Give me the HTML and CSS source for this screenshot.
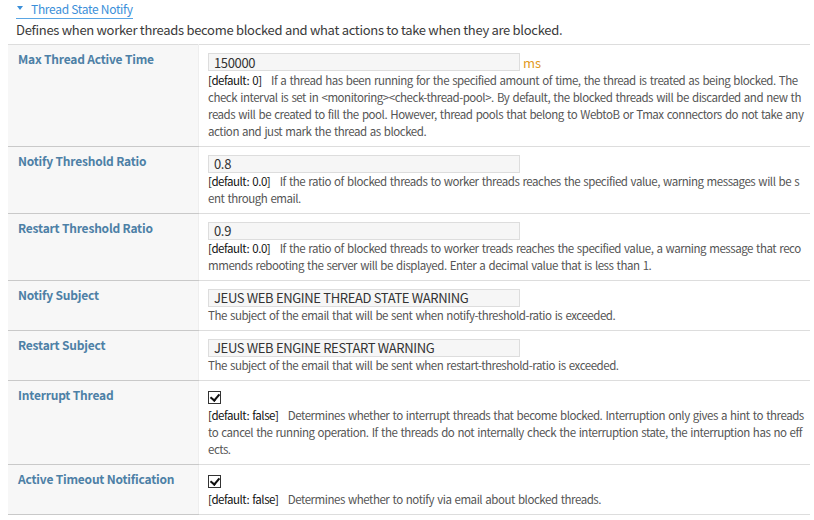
FILE: index.html
```html
<!DOCTYPE html>
<html lang="en">
<head>
  <meta charset="UTF-8">
  <title>Thread State Notify</title>
  <link rel="stylesheet" href="styles.css">
</head>
<body>
  <div class="section">
    <div class="section-head">
      <a class="toggle" href="#"><span class="arrow"></span>Thread State Notify</a>
    </div>
    <p class="section-desc">Defines when worker threads become blocked and what actions to take when they are blocked.</p>

    <table class="props">
      <tr>
        <th>Max Thread Active Time</th>
        <td>
          <div class="field unit-field"><input type="text" value="150000"><span class="unit">ms</span></div>
          <p class="help"><b>[default: 0]</b>&nbsp;&nbsp; If a thread has been running for the specified amount of time, the thread is treated as being blocked. The check interval is set in &lt;monitoring&gt;&lt;check-thread-pool&gt;. By default, the blocked threads will be discarded and new threads will be created to fill the pool. However, thread pools that belong to WebtoB or Tmax connectors do not take any action and just mark the thread as blocked.</p>
        </td>
      </tr>
      <tr>
        <th>Notify Threshold Ratio</th>
        <td>
          <div class="field"><input type="text" value="0.8"></div>
          <p class="help"><b>[default: 0.0]</b>&nbsp;&nbsp; If the ratio of blocked threads to worker threads reaches the specified value, warning messages will be sent through email.</p>
        </td>
      </tr>
      <tr>
        <th>Restart Threshold Ratio</th>
        <td>
          <div class="field"><input type="text" value="0.9"></div>
          <p class="help"><b>[default: 0.0]</b>&nbsp;&nbsp; If the ratio of blocked threads to worker treads reaches the specified value, a warning message that recommends rebooting the server will be displayed. Enter a decimal value that is less than 1.</p>
        </td>
      </tr>
      <tr>
        <th>Notify Subject</th>
        <td>
          <div class="field"><input type="text" value="JEUS WEB ENGINE THREAD STATE WARNING"></div>
          <p class="help">The subject of the email that will be sent when notify-threshold-ratio is exceeded.</p>
        </td>
      </tr>
      <tr>
        <th>Restart Subject</th>
        <td>
          <div class="field"><input type="text" value="JEUS WEB ENGINE RESTART WARNING"></div>
          <p class="help">The subject of the email that will be sent when restart-threshold-ratio is exceeded.</p>
        </td>
      </tr>
      <tr>
        <th>Interrupt Thread</th>
        <td>
          <div class="field"><span class="check"></span></div>
          <p class="help"><b>[default: false]</b>&nbsp;&nbsp; Determines whether to interrupt threads that become blocked. Interruption only gives a hint to threads to cancel the running operation. If the threads do not internally check the interruption state, the interruption has no effects.</p>
        </td>
      </tr>
      <tr>
        <th>Active Timeout Notification</th>
        <td>
          <div class="field"><span class="check"></span></div>
          <p class="help"><b>[default: false]</b>&nbsp;&nbsp; Determines whether to notify via email about blocked threads.</p>
        </td>
      </tr>
    </table>
  </div>
</body>
</html>
```

FILE: styles.css
```css
body {
  margin: 0;
  background-color: #fff;
  font-family: "Noto Sans CJK KR", "Noto Sans", sans-serif;
  color: #444;
}

.section {
  padding: 0 4px 0 8px;
}

.section-head {
  display: flex;
  align-items: flex-start;
  padding: 1px 0 0 8px;
  height: 18px;
}

.toggle {
  display: flex;
  align-items: center;
  color: #3b8fd9;
  font-size: 12px;
  line-height: 16px;
  letter-spacing: -0.3px;
  text-decoration: none;
  border-bottom: 1px solid #5aa6e4;
  padding-bottom: 1px;
}

.arrow {
  width: 0;
  height: 0;
  border-left: 3px solid transparent;
  border-right: 3px solid transparent;
  border-top: 4px solid #3b8fd9;
  margin: 0 8px 2px 1px;
}

.section-desc {
  margin: 0 0 3px 8px;
  font-size: 13px;
  line-height: 22px;
  letter-spacing: -0.3px;
  color: #3a3a3a;
}

.props {
  width: 100%;
  border-collapse: collapse;
  border-top: 1px solid #ddd;
}

.props th,
.props td {
  vertical-align: top;
  border-bottom: 1px solid #ddd;
}

.props th {
  width: 180px;
  background-color: #f7f7f7;
  border-bottom-color: #c9c9c9;
  border-right: 1px solid #eee;
  padding: 6px 0 0 10px;
  text-align: left;
  font-size: 12px;
  line-height: 16px;
  letter-spacing: -0.2px;
  font-weight: bold;
  color: #4d80a6;
}

.props td {
  padding: 8px 6px 6px 9px;
}

.field {
  display: flex;
  align-items: center;
  height: 17px;
}

.unit-field {
  height: 18px;
  margin-bottom: 1px;
}

.field input {
  width: 312px;
  height: 18px;
  box-sizing: border-box;
  margin: 0;
  padding: 0 5px;
  border: 1px solid #ddd;
  background-color: #f6f6f6;
  font-family: inherit;
  font-size: 13px;
  letter-spacing: -0.35px;
  color: #333;
}

.unit {
  margin-left: 3px;
  color: #e29a23;
  font-size: 13px;
}

.check {
  display: inline-block;
  width: 13px;
  height: 13px;
  box-sizing: border-box;
  border: 1px solid #333;
  position: relative;
}

.check::after {
  content: "";
  position: absolute;
  left: 3px;
  top: 0;
  width: 4px;
  height: 7px;
  border: solid #111;
  border-width: 0 2px 2px 0;
  transform: rotate(40deg);
}

.help {
  margin: 1px 0 0;
  font-size: 11.5px;
  line-height: 17px;
  letter-spacing: -0.46px;
  word-spacing: 1px;
  color: #555;
  word-break: break-all;
}

.help b {
  font-weight: normal;
  color: #111;
}
```
